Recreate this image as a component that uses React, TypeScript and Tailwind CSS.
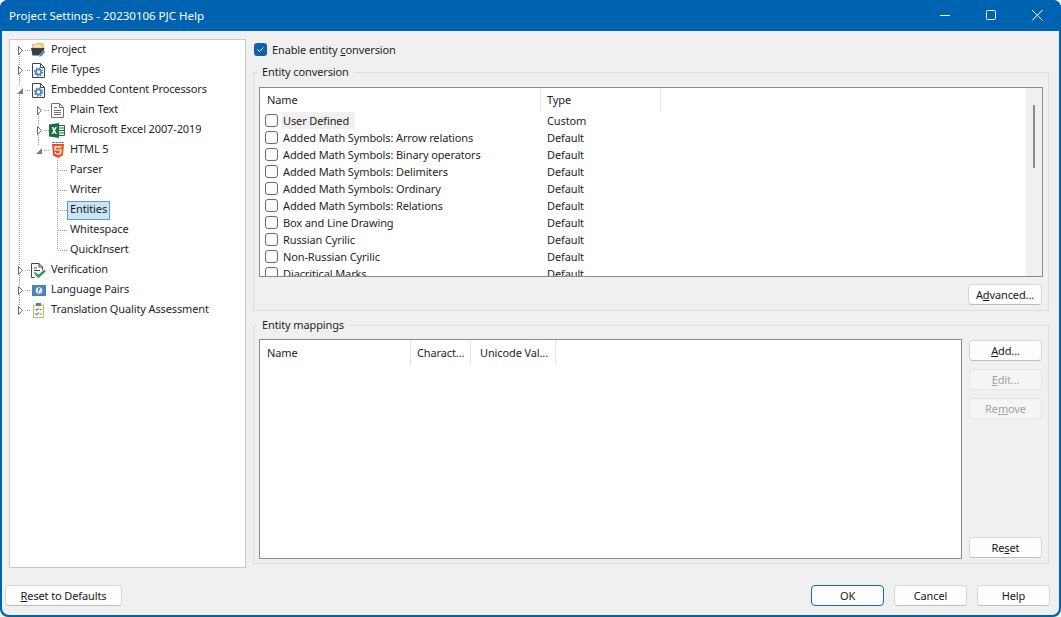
import type { ReactNode } from 'react'

type RowDef = {
  label: string
  level: 0 | 1 | 2
  icon?: ReactNode
  exp?: 'open' | 'closed'
  selected?: boolean
  // guide x positions that pass through this row, y range in the row
  guides: [number, number, number][]
}

function Gear({ x, y }: { x: number; y: number }) {
  return (
    <g transform={`translate(${x} ${y})`}>
      <circle r="2.600" fill="#fff" stroke="#4a86c2" strokeWidth="1.800" />
      <circle r="4" fill="none" stroke="#4a86c2" strokeWidth="1.400" strokeDasharray="1.570 1.570" />
    </g>
  )
}

function DocGear() {
  return (
    <svg width="13" height="15" viewBox="0 0 13 15">
      <path d="M0.500 0.500h8l4 4v10h-12z" fill="#fff" stroke="#3c4650" />
      <path d="M8.500 0.500v4h4" fill="none" stroke="#3c4650" />
      <Gear x={6.500} y={9} />
    </svg>
  )
}

function ProjectIcon() {
  return (
    <svg width="15" height="14" viewBox="0 0 15 14">
      <path d="M1.500 1.500h3l1-1h6l1 1v4h-11z" fill="#f2cd76" stroke="#d4ae58" strokeWidth="0.700" />
      <path d="M2.500 3h8" stroke="#fff" />
      <path d="M0 5h13.500l-2 7.500H1.500z" fill="#3b3f45" />
      <path d="M8.500 12l4.500-4.500 1.500 1.500-4.500 4.500-2 .5z" fill="#3f7fbf" stroke="#f4f8fb" strokeWidth="0.500" />
    </svg>
  )
}

function PlainTextIcon() {
  return (
    <svg width="13" height="15" viewBox="0 0 13 15">
      <path d="M0.500 0.500h8l4 4v10h-12z" fill="#fff" stroke="#6d7378" />
      <path d="M8.500 0.500v4h4M3 4.500h3M3 7.500h7M3 9.500h7M3 11.500h7" fill="none" stroke="#6d7378" />
    </svg>
  )
}

function ExcelIcon() {
  return (
    <svg width="16" height="15" viewBox="0 0 16 15" className="ml-[-1px] shrink-0">
      <path d="M9 2.500h6.500v10H9z" fill="#fff" stroke="#1d7044" />
      <path d="M10 5h5M10 7.500h5M10 10h5" stroke="#1d7044" />
      <path d="M0 1.500L10 0v15L0 13.500z" fill="#1d7044" />
      <path d="M2.500 4h1.700l1 1.900 1-1.900h1.600L6 7.500l1.900 3.500H6.200l-1-2-1 2H2.500l1.900-3.500z" fill="#fff" />
    </svg>
  )
}

function Html5Icon() {
  return (
    <svg width="12" height="16" viewBox="0 0 12 16">
      <path d="M0.500 0.500h11" stroke="#555" strokeDasharray="2 1" />
      <path d="M0 2h12l-1.100 11.500L6 16l-4.900-2.500z" fill="#e44d26" />
      <path d="M6 3h4.800l-.9 9.800L6 14.800z" fill="#f16529" />
      <path d="M9.300 4.800H2.800l.3 3.200h5.800l-.3 3.300L6 12.200l-2.600-.9-.2-1.500" fill="none" stroke="#fff" strokeWidth="1.200" />
    </svg>
  )
}

function VerifyIcon() {
  return (
    <svg width="15" height="15" viewBox="0 0 15 15">
      <path d="M3.500 14.500h-3v-14h7.500l3.500 3.500v3" fill="#fff" stroke="#3c4650" />
      <path d="M8 0.500v3.500h3.500M3 5h3M3 7.500h6M3 10h2" fill="none" stroke="#3c4650" />
      <path d="M4.500 10.500l3 3 6.500-6" fill="none" stroke="#2a9a63" strokeWidth="2.400" />
    </svg>
  )
}

function LanguageIcon() {
  return (
    <svg width="14" height="11" viewBox="0 0 14 11">
      <rect width="14" height="11" fill="#4d82bd" />
      <circle cx="7" cy="5.500" r="3.300" fill="#e8eff6" />
      <path d="M6 3.200h2.200v1.800H6.900v2.500H6z" fill="#4d82bd" />
    </svg>
  )
}

function ClipboardIcon() {
  return (
    <svg width="11" height="15" viewBox="0 0 11 15">
      <rect x="0.500" y="2" width="10" height="12.500" fill="#fff" stroke="#d8b25c" />
      <rect x="3" y="0" width="5" height="3" fill="#777" />
      <path d="M2.500 6l1.300 1.300 1.900-2.300M2.500 10.500l1.300 1.300 1.900-2.300" fill="none" stroke="#3f7fbf" strokeWidth="1.100" />
      <path d="M6.500 6.500h2.500M6.500 11h2.500" stroke="#888" />
    </svg>
  )
}

const rows: RowDef[] = [
  { label: 'Project', level: 0, exp: 'closed', icon: <ProjectIcon />, guides: [[9, 14, 20]] },
  { label: 'File Types', level: 0, exp: 'closed', icon: <DocGear />, guides: [[9, 0, 5], [9, 15, 20]] },
  { label: 'Embedded Content Processors', level: 0, exp: 'open', icon: <DocGear />, guides: [[9, 0, 5], [9, 15, 20]] },
  { label: 'Plain Text', level: 1, exp: 'closed', icon: <PlainTextIcon />, guides: [[9, 0, 20], [28, 14, 20]] },
  { label: 'Microsoft Excel 2007-2019', level: 1, exp: 'closed', icon: <ExcelIcon />, guides: [[9, 0, 20], [28, 0, 5], [28, 15, 20]] },
  { label: 'HTML 5', level: 1, exp: 'open', icon: <Html5Icon />, guides: [[9, 0, 20], [28, 0, 5]] },
  { label: 'Parser', level: 2, guides: [[9, 0, 20], [47, 0, 20]] },
  { label: 'Writer', level: 2, guides: [[9, 0, 20], [47, 0, 20]] },
  { label: 'Entities', level: 2, selected: true, guides: [[9, 0, 20], [47, 0, 20]] },
  { label: 'Whitespace', level: 2, guides: [[9, 0, 20], [47, 0, 20]] },
  { label: 'QuickInsert', level: 2, guides: [[9, 0, 20], [47, 0, 10]] },
  { label: 'Verification', level: 0, exp: 'closed', icon: <VerifyIcon />, guides: [[9, 0, 5], [9, 15, 20]] },
  { label: 'Language Pairs', level: 0, exp: 'closed', icon: <LanguageIcon />, guides: [[9, 0, 5], [9, 15, 20]] },
  { label: 'Translation Quality Assessment', level: 0, exp: 'closed', icon: <ClipboardIcon />, guides: [[9, 0, 5]] },
]

function TreeRow({ row }: { row: RowDef }) {
  const width = [21, 40, 58][row.level]
  const arrowX = [9, 28, 0][row.level]
  return (
    <div className="flex h-5 items-center">
      <svg width={width} height="20" className="shrink-0">
        {row.guides.map(([x, y1, y2], i) => (
          <path key={i} d={`M${x + 0.5} ${y1}V${y2}`} stroke="#9a9a9a" strokeDasharray="1 1" />
        ))}
        {row.level === 2 ? (
          <path d="M48 10.500H58" stroke="#9a9a9a" strokeDasharray="1 1" />
        ) : (
          <path d={`M${arrowX + 6} 10.500H${arrowX + 11}`} stroke="#9a9a9a" strokeDasharray="1 1" />
        )}
        {row.exp === 'closed' && (
          <path d={`M${arrowX - 0.500} 6.500l4 4-4 4z`} fill="#fff" stroke="#6e6e6e" />
        )}
        {row.exp === 'open' && <path d={`M${arrowX - 2} 14h6v-6z`} fill="#7a7a7a" />}
      </svg>
      {row.icon && <div className="flex w-[15px] shrink-0 items-center justify-center">{row.icon}</div>}
      {row.selected ? (
        <span className="ml-[-1px] flex h-[19px] items-center border border-[#5a9bd0] bg-[#cce4f7] px-[2px] pb-[2px] text-[#1a1a1a]">
          {row.label}
        </span>
      ) : (
        <span className={`pb-[2px] ${row.icon ? 'ml-[5px]' : 'ml-[2px]'}`}>{row.label}</span>
      )}
    </div>
  )
}

function Btn({
  children,
  disabled,
  primary,
  className = '',
}: {
  children: ReactNode
  disabled?: boolean
  primary?: boolean
  className?: string
}) {
  const look = primary
    ? 'border-[1.5px] border-[#0f6cb0] bg-[#fdfdfd] text-[#1a1a1a]'
    : disabled
      ? 'border border-[#e6e6e6] bg-[#f5f5f5] text-[#a3a3a3]'
      : 'border border-[#d6d6d6] border-b-[#bcbcbc] bg-[#fdfdfd] text-[#1a1a1a]'
  return (
    <button className={`flex h-[21px] items-center justify-center rounded-[4px] pt-[1px] ${look} ${className}`}>
      {children}
    </button>
  )
}

function Group({ title, children, className = '' }: { title: string; children: ReactNode; className?: string }) {
  return (
    <fieldset className={`h-[247px] border border-[#dedede] pr-[5px] pl-[5px] ${className}`}>
      <legend className="ml-[-2px] h-4 px-[5px] leading-4">{title}</legend>
      {children}
    </fieldset>
  )
}

function HeaderCell({ label, className }: { label: string; className: string }) {
  return <div className={`flex h-[24px] shrink-0 items-center border-r border-[#e5e5e5] ${className}`}>{label}</div>
}

const entities: [string, string][] = [
  ['User Defined', 'Custom'],
  ['Added Math Symbols: Arrow relations', 'Default'],
  ['Added Math Symbols: Binary operators', 'Default'],
  ['Added Math Symbols: Delimiters', 'Default'],
  ['Added Math Symbols: Ordinary', 'Default'],
  ['Added Math Symbols: Relations', 'Default'],
  ['Box and Line Drawing', 'Default'],
  ['Russian Cyrilic', 'Default'],
  ['Non-Russian Cyrilic', 'Default'],
  ['Diacritical Marks', 'Default'],
]

export default function App() {
  return (
    <div className="flex h-[617px] w-[1061px] flex-col overflow-hidden rounded-[8px] bg-[#0063b1] font-['Noto_Sans',sans-serif] text-[11px] tracking-[-0.12px] text-[#1f1f1f]">
      <div className="flex h-[31px] shrink-0 items-center justify-between bg-[#0063b1] pr-[1px] pl-[9px] text-white">
        <span className="text-[11.5px] tracking-normal">Project Settings - 20230106 PJC Help</span>
        <div className="flex items-center">
          <svg width="46" height="31" viewBox="0 0 46 31">
            <path d="M18 15.500h10" stroke="#fff" />
          </svg>
          <svg width="46" height="31" viewBox="0 0 46 31">
            <rect x="18.500" y="10.500" width="9" height="9" rx="1" fill="none" stroke="#fff" />
          </svg>
          <svg width="46" height="31" viewBox="0 0 46 31">
            <path d="M18 10l10.500 10.500M28.500 10L18 20.500" stroke="#fff" />
          </svg>
        </div>
      </div>
      <div className="mx-[2px] mb-[2px] flex flex-1 flex-col rounded-b-[7px] bg-[#f0f0f0]">
        <div className="flex gap-[7px] pt-[8px] pl-[7px]">
          <div className="h-[529px] w-[237px] shrink-0 border border-[#c3cbd0] bg-white">
            {rows.map((r) => (
              <TreeRow key={r.label} row={r} />
            ))}
          </div>
          <div className="w-[796px]">
            <div className="flex h-[25px] items-start gap-[5px] pt-[4px] pl-[1px]">
              <div className="flex h-[13px] w-[13px] items-center justify-center rounded-[3px] bg-[#0f62ad]">
                <svg width="9" height="9" viewBox="0 0 9 9">
                  <path d="M1.500 4.500l2 2 4-4" fill="none" stroke="#fff" />
                </svg>
              </div>
              <span className="mt-[-1px] leading-[15px]">
                Enable entity <u>c</u>onversion
              </span>
            </div>
            <Group title="Entity conversion">
              <div className="mt-[7px] flex h-[190px] overflow-hidden border border-[#8a8a8a] bg-white">
                <div className="min-w-0 flex-1">
                  <div className="flex">
                    <HeaderCell label="Name" className="w-[281px] pl-[7px]" />
                    <HeaderCell label="Type" className="w-[120px] pl-[6px]" />
                  </div>
                  {entities.map(([name, type], i) => (
                    <div key={name} className="flex h-[17px] items-center">
                      <div className="flex w-[281px] shrink-0 items-center pl-[5px]">
                        <div className="h-[13px] w-[13px] shrink-0 rounded-[3px] border border-[#6b6b6b] bg-[#fbfbfb]" />
                        <span className={`ml-[3px] px-[2px] leading-[17px] ${i === 0 ? 'bg-[#f0f0f0] pr-[6px]' : ''}`}>
                          {name}
                        </span>
                      </div>
                      <span className="pl-[6px] leading-[17px]">{type}</span>
                    </div>
                  ))}
                </div>
                <div className="flex w-[16px] shrink-0 justify-center bg-[#f0f0f0] pt-[17px]">
                  <div className="h-[63px] w-[2px] bg-[#8a8a8a]" />
                </div>
              </div>
              <div className="mt-[7px] flex justify-end pr-[1px]">
                <Btn className="w-[74px]">
                  A<u>d</u>vanced...
                </Btn>
              </div>
            </Group>
            <Group title="Entity mappings" className="mt-[6px]">
              <div className="mt-[6px] flex">
                <div className="h-[220px] w-[703px] shrink-0 border border-[#8a8a8a] bg-white pt-[1px]">
                  <div className="flex">
                    <HeaderCell label="Name" className="w-[151px] pl-[7px]" />
                    <HeaderCell label="Charact..." className="w-[60px] pl-[6px]" />
                    <HeaderCell label="Unicode Val..." className="w-[85px] pl-[9px]" />
                  </div>
                </div>
                <div className="ml-[7px] flex h-[220px] w-[73px] flex-col pt-[1px]">
                  <Btn>
                    <u>A</u>dd...
                  </Btn>
                  <Btn disabled className="mt-[8px]">
                    <u>E</u>dit...
                  </Btn>
                  <Btn disabled className="mt-[8px]">
                    Re<u>m</u>ove
                  </Btn>
                  <Btn className="mt-auto mb-[1px]">
                    Re<u>s</u>et
                  </Btn>
                </div>
              </div>
            </Group>
          </div>
        </div>
        <div className="mt-[17px] flex justify-between pr-[9px] pl-[3px]">
          <Btn className="w-[117px]">
            <u>R</u>eset to Defaults
          </Btn>
          <div className="flex gap-[10px]">
            <Btn primary className="w-[73px]">
              OK
            </Btn>
            <Btn className="w-[73px]">Cancel</Btn>
            <Btn className="w-[73px]">Help</Btn>
          </div>
        </div>
      </div>
    </div>
  )
}
